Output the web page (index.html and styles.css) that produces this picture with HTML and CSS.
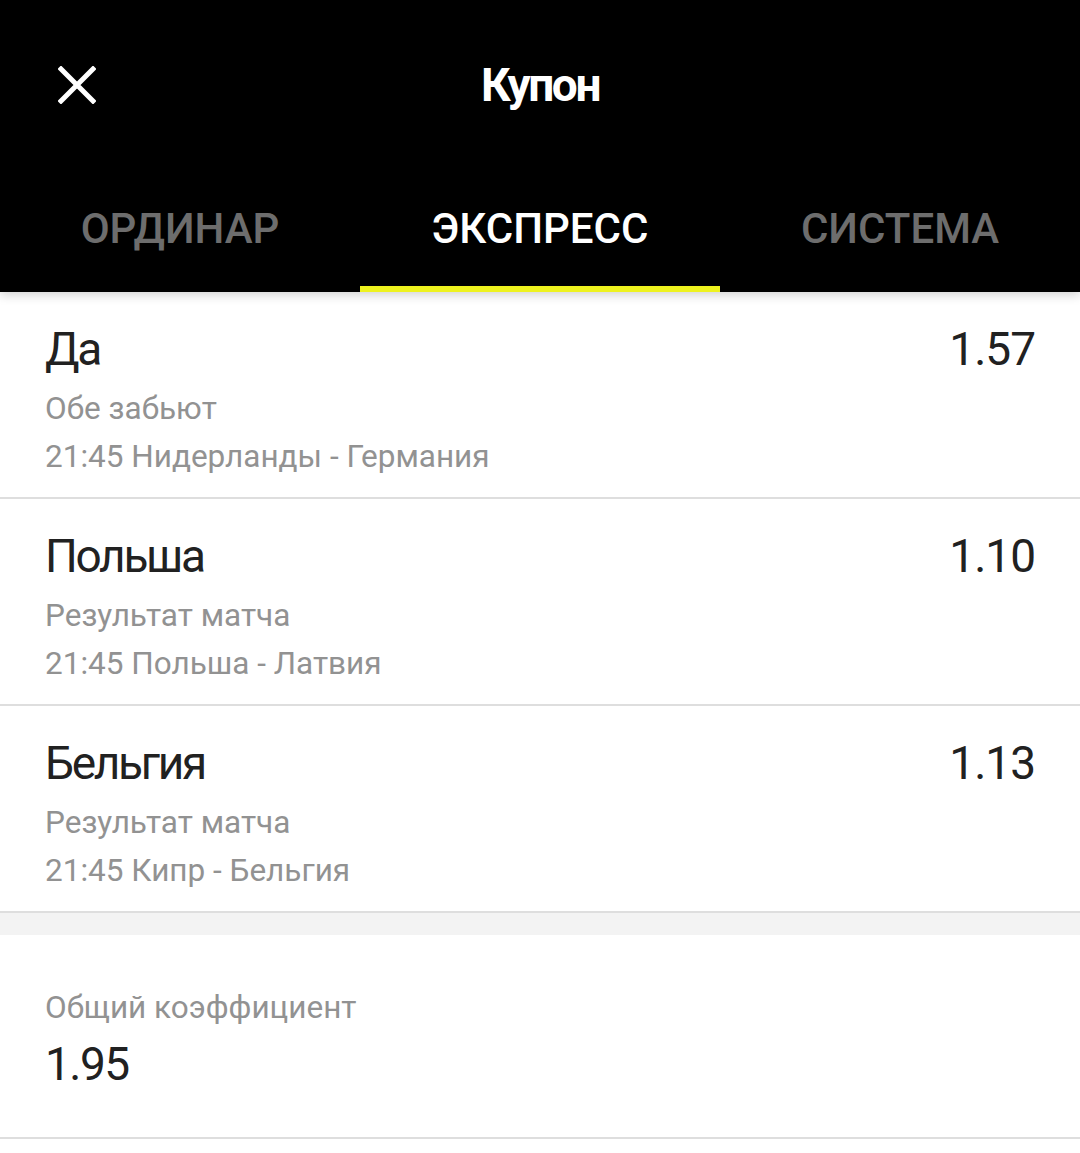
FILE: index.html
```html
<!DOCTYPE html>
<html lang="ru">
<head>
    <meta charset="UTF-8">
    <title>Купон</title>
    <link rel="stylesheet" href="styles.css">
</head>
<body>

<div class="header">
    <div class="topbar">
        <div class="close-btn">
            <svg width="38" height="38" viewBox="0 0 38 38">
                <path d="M3 3 L35 35 M35 3 L3 35" stroke="#fff" stroke-width="5" stroke-linecap="square" fill="none"/>
            </svg>
        </div>
        <div class="title">Купон</div>
        <div></div>
    </div>
    <div class="tabs">
        <div class="tab">ОРДИНАР</div>
        <div class="tab active">ЭКСПРЕСС</div>
        <div class="tab">СИСТЕМА</div>
    </div>
</div>

<div class="bets">
    <div class="bet">
        <div class="bet-head">
            <span class="bet-name">Да</span>
            <span class="bet-odd">1.57</span>
        </div>
        <div class="bet-sub">Обе забьют</div>
        <div class="bet-sub">21:45 Нидерланды - Германия</div>
    </div>
    <div class="bet">
        <div class="bet-head">
            <span class="bet-name">Польша</span>
            <span class="bet-odd">1.10</span>
        </div>
        <div class="bet-sub">Результат матча</div>
        <div class="bet-sub">21:45 Польша - Латвия</div>
    </div>
    <div class="bet">
        <div class="bet-head">
            <span class="bet-name">Бельгия</span>
            <span class="bet-odd">1.13</span>
        </div>
        <div class="bet-sub">Результат матча</div>
        <div class="bet-sub">21:45 Кипр - Бельгия</div>
    </div>
</div>

<div class="spacer"></div>

<div class="total">
    <div class="total-label">Общий коэффициент</div>
    <div class="total-value">1.95</div>
</div>

</body>
</html>
```

FILE: styles.css
```css
body {
    margin: 0;
    font-family: Roboto, "Noto Sans", sans-serif;
    background: white;
    color: #212121;
}
.header {
    background: #000;
    position: relative;
    z-index: 1;
    box-shadow: 0 3px 10px rgba(0,0,0,0.18);
}
.topbar {
    height: 170px;
    display: grid;
    grid-template-columns: 1fr auto 1fr;
    align-items: center;
}
.close-btn {
    padding-left: 58px;
    height: 38px;
}
.title {
    color: white;
    font-size: 46px;
    font-weight: bold;
    letter-spacing: -2.4px;
}
.tabs {
    display: flex;
}
.tab {
    flex: 1;
    height: 116px;
    display: flex;
    align-items: center;
    justify-content: center;
    font-size: 42px;
    font-weight: 500;
    color: #6d6d6d;
    border-bottom: 6px solid transparent;
}
.tab.active {
    color: white;
    border-bottom-color: #eef21e;
}
.bet {
    padding: 30px 45px 16px;
    border-bottom: 2px solid #dedede;
}
.bet-head {
    display: flex;
    justify-content: space-between;
    font-size: 46px;
    line-height: 54px;
    margin-bottom: 9px;
}
.bet-name {
    letter-spacing: -2.3px;
}
.bet-odd {
    letter-spacing: -1px;
}
.bet-sub, .total-label {
    font-size: 31.5px;
    line-height: 48px;
    color: #929292;
}
.spacer {
    height: 22px;
    background: #f3f3f3;
}
.total {
    padding: 49px 45px 46px;
    border-bottom: 2px solid #dedede;
}
.total-value {
    font-size: 46px;
    line-height: 54px;
    margin-top: 5px;
    letter-spacing: -1.5px;
}
```
